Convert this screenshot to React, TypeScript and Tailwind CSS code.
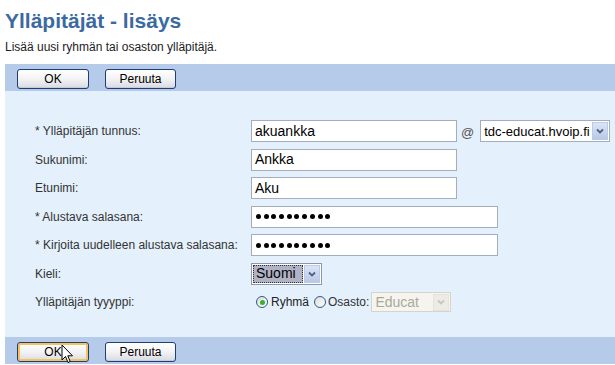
import React from "react";

function XpButton({ label, hover = false }: { label: string; hover?: boolean }) {
  return (
    <div
      className={`flex h-[20px] items-center justify-center rounded-[3px] border border-[#1d3f72] bg-gradient-to-b from-[#ffffff] via-[#f3f3f5] to-[#d9dae2] text-[12px] text-black ${
        hover ? "shadow-[inset_0_0_0_2px_#f6c25b]" : "shadow-[inset_0_-1px_0_#c8cad6]"
      }`}
    >
      {label}
    </div>
  );
}

function Toolbar({ hover = false }: { hover?: boolean }) {
  return (
    <div className="flex h-[27px] items-start gap-[16px] bg-[#b5cbe9] pl-[12px] pt-[5px]">
      <div className="w-[72px]">
        <XpButton label="OK" hover={hover} />
      </div>
      <div className="w-[71px]">
        <XpButton label="Peruuta" />
      </div>
    </div>
  );
}

function TextBox({ value, width }: { value: string; width: string }) {
  return (
    <div
      className={`flex h-[22px] items-center border border-[#a3adbb] bg-white pl-[3px] text-[14px] text-black ${width}`}
    >
      {value}
    </div>
  );
}

function PasswordBox() {
  return (
    <div className="flex h-[22px] w-[247px] items-center gap-[2.7px] border border-[#a3adbb] bg-white pl-[4px]">
      {Array.from({ length: 10 }).map((_, i) => (
        <div key={i} className="h-[5px] w-[5px] rounded-full bg-black" />
      ))}
    </div>
  );
}

function Chevron({ color = "#4d6185" }: { color?: string }) {
  return (
    <svg width="8" height="6" viewBox="0 0 8 6">
      <path d="M1 1.5 L4 4.5 L7 1.5" fill="none" stroke={color} strokeWidth="1.8" />
    </svg>
  );
}

function DropButton({ disabled = false }: { disabled?: boolean }) {
  return (
    <div
      className={`flex h-full w-[16px] items-center justify-center border ${
        disabled
          ? "border-[#e6e4da] bg-[#ecebe5]"
          : "border-[#bccbe5] bg-gradient-to-b from-[#dbe5f6] to-[#b8c8e6]"
      }`}
    >
      <Chevron color={disabled ? "#c9c7bd" : "#4d6185"} />
    </div>
  );
}

function Row({ label, children }: { label: string; children: React.ReactNode }) {
  return (
    <div className="flex h-[28.5px] items-center">
      <div className="w-[216px] text-[12px] text-[#333333]">{label}</div>
      <div className="flex items-center">{children}</div>
    </div>
  );
}

function Radio({ checked }: { checked: boolean }) {
  return (
    <div className="flex h-[12px] w-[12px] items-center justify-center rounded-full border border-[#2c5a8c] bg-gradient-to-br from-[#dcdcd6] to-white">
      {checked && <div className="h-[5px] w-[5px] rounded-full bg-[#3fae2c]" />}
    </div>
  );
}

export default function App() {
  return (
    <div className="relative h-[365px] w-[615px] overflow-hidden bg-white font-['Liberation_Sans',Arial,sans-serif]">
      <h1 className="ml-[5px] mt-[8px] text-[21px] font-bold leading-[26px] text-[#3b6aa0]">
        Ylläpitäjät - lisäys
      </h1>
      <p className="ml-[5px] mt-[6px] text-[12px] leading-[14px] text-[#222222]">
        Lisää uusi ryhmän tai osaston ylläpitäjä.
      </p>

      <div className="ml-[5px] mt-[10px]">
        <Toolbar />

        <div className="h-[246px] bg-[#e4f0fc] pl-[30px] pt-[26px]">
          <Row label="* Ylläpitäjän tunnus:">
            <TextBox value="akuankka" width="w-[206px]" />
            <span className="ml-[4px] mr-[6px] mt-[3px] text-[13px] text-[#555555]">@</span>
            <div className="flex h-[22px] w-[130px] items-center overflow-hidden border border-[#a3adbb] bg-white pl-[3px] pr-[1px] text-[13px] text-black">
              <span className="flex-1 whitespace-nowrap">tdc-educat.hvoip.fi</span>
              <div className="h-[18px] shrink-0">
                <DropButton />
              </div>
            </div>
          </Row>
          <Row label="Sukunimi:">
            <TextBox value="Ankka" width="w-[206px]" />
          </Row>
          <Row label="Etunimi:">
            <TextBox value="Aku" width="w-[206px]" />
          </Row>
          <Row label="* Alustava salasana:">
            <PasswordBox />
          </Row>
          <Row label="* Kirjoita uudelleen alustava salasana:">
            <PasswordBox />
          </Row>
          <Row label="Kieli:">
            <div className="flex h-[22px] w-[71px] items-center border border-[#8d97a8] bg-white p-[1px]">
              <div className="flex h-full w-[50px] items-center border border-dotted border-[#333] bg-[#b0b2c6] pl-[2px] text-[14px] text-black">
                Suomi
              </div>
              <div className="ml-[1px] h-[18px]">
                <DropButton />
              </div>
            </div>
          </Row>
          <Row label="Ylläpitäjän tyyyppi:">
            <div className="flex items-center pl-[5px] text-[12px] text-[#222]">
              <Radio checked />
              <span className="ml-[3px]">Ryhmä</span>
              <div className="ml-[5px]">
                <Radio checked={false} />
              </div>
              <span className="ml-[2px] text-[#333]">Osasto:</span>
              <div className="ml-[2px] flex h-[20px] w-[80px] items-center border border-[#d6d4cb] bg-[#f5f4ef] pl-[3px] pr-[1px] text-[14px] text-[#aca899]">
                <span className="flex-1">Educat</span>
                <div className="h-[17px]">
                  <DropButton disabled />
                </div>
              </div>
            </div>
          </Row>
        </div>

        <Toolbar hover />
      </div>

      {/* mouse pointer over the OK button */}
      <svg className="absolute left-[61px] top-[344px]" width="14" height="21" viewBox="0 0 14 21">
        <path
          d="M1 1 L1 16 L4.5 12.5 L7 18.5 L9.2 17.5 L6.8 11.8 L11.5 11.8 Z"
          fill="white"
          stroke="black"
          strokeWidth="1"
          strokeLinejoin="miter"
        />
      </svg>
    </div>
  );
}
